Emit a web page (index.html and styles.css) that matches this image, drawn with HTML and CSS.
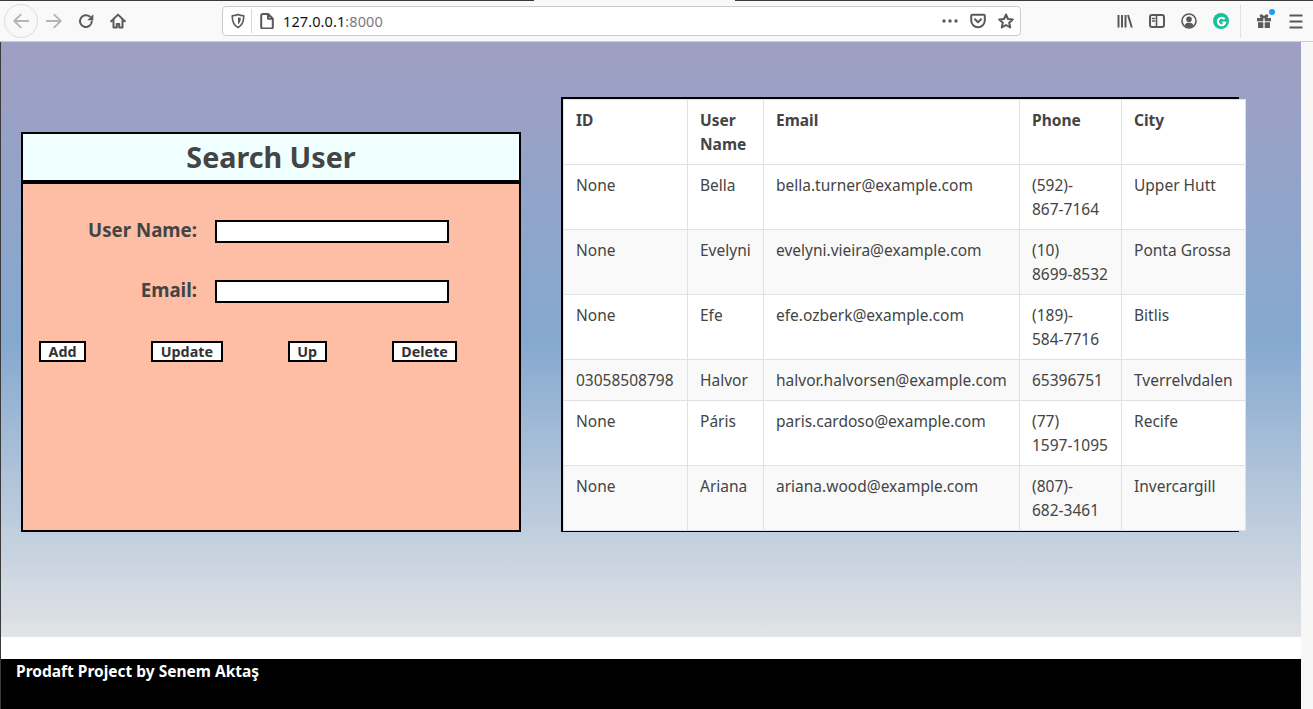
FILE: index.html
```html
<!DOCTYPE html>
<html lang="en">
<head>
<meta charset="utf-8">
<title>Prodaft Project</title>
<link rel="stylesheet" href="styles.css">
</head>
<body>
<header class="chrome">
  <span class="tab-notch"></span>
  <div class="nav-group">
    <span class="back-btn">
      <svg class="ico ico-lg" viewBox="0 0 16 16"><path class="st-faint" d="M14.500 8H2M7.800 2.300 2 8l5.800 5.700"/></svg>
    </span>
    <span class="slot">
      <svg class="ico ico-lg" viewBox="0 0 16 16"><path class="st-faint" d="M1.500 8H14M8.200 2.300 14 8l-5.800 5.700"/></svg>
    </span>
    <span class="slot">
      <svg class="ico" viewBox="0 0 16 16"><path class="st st-heavy" d="M13.800 8.500A5.900 5.900 0 1 1 11.800 3.600"/><path class="fl" d="M15.300 1.200v6h-6z"/></svg>
    </span>
    <span class="slot">
      <svg class="ico" viewBox="0 0 16 16"><path class="st st-heavy" d="M1.200 8.200 8 1.600l6.800 6.600M3.500 6.500v8h3.300v-3.600h2.400v3.600h3.300v-8"/></svg>
    </span>
  </div>
  <div class="urlbar">
    <svg class="ico shield" viewBox="0 0 16 16"><path class="st" d="M8 1.500c2 1 4 1.200 5.800 1.200 0 5-1 9.300-5.800 11.800C3.200 12 2.200 7.700 2.200 2.700 4 2.700 6 2.500 8 1.500z"/><path class="fl" d="M8 4.200c1 .4 1.800.5 2.800.5 0 2.800-.5 5-2.800 6.700z"/></svg>
    <span class="url-sep"></span>
    <svg class="ico doc-icon" viewBox="0 0 16 16"><path class="st st-heavy" d="M2.200 2.800C2.200 1.700 2.900 1 4 1h5.200L13.800 5.600v8.400c0 .9-.7 1.600-1.600 1.600H4c-1.100 0-1.800-.7-1.800-1.600zM9 1.200V5.800h4.600"/></svg>
    <span class="url-text">127.0.0.1<span class="url-port">:8000</span></span>
    <span class="url-actions">
      <svg class="ico" viewBox="0 0 16 16"><circle class="fl" cx="2" cy="8" r="1.700"/><circle class="fl" cx="8" cy="8" r="1.700"/><circle class="fl" cx="14" cy="8" r="1.700"/></svg>
      <svg class="ico" viewBox="0 0 16 16"><path class="st st-heavy" d="M2.200 1.800h11.600c.6 0 1 .4 1 1V7.500a6.800 6.800 0 0 1-13.600 0V2.800c0-.6.400-1 1-1z"/><path class="st st-heavy" d="M5 6.200 8 9.200 11 6.200"/></svg>
      <svg class="ico" viewBox="0 0 16 16"><path class="st st-heavy" d="M8 1.500 10 6l4.800.5-3.600 3.200 1 4.800L8 12l-4.200 2.500 1-4.800L1.200 6.500 6 6z"/></svg>
    </span>
  </div>
  <div class="tools">
    <svg class="ico" viewBox="0 0 16 16"><path class="st st-heavy st-butt" d="M1.500 2v12.500M5 2v12.500M8.500 2v12.500M11 2l3.800 12.500"/></svg>
    <svg class="ico" viewBox="0 0 16 16"><rect class="st st-heavy" x="1" y="2" width="14" height="12" rx="2"/><path class="st" d="M7.500 2.500v11M3.500 5.500h2M3.500 8h2"/></svg>
    <svg class="ico" viewBox="0 0 16 16"><circle class="st" cx="8" cy="8" r="7"/><circle class="fl" cx="8" cy="6.300" r="2.800"/><path class="fl" d="M3.500 12.500C4.500 10 6 9.800 8 9.800s3.500.2 4.500 2.700C11 14 9.500 14.400 8 14.400S5 14 3.500 12.500z"/></svg>
    <span class="grammarly">
      <svg class="ico" viewBox="0 0 16 16"><path class="st-white" d="M12.500 4.500A5.500 5.500 0 1 0 13.500 9.500H9"/></svg>
    </span>
    <span class="tool-sep"></span>
    <span class="gift">
      <svg class="ico" viewBox="0 0 16 16"><path class="fl" d="M1 5h6.300v3.200H1zM8.700 5H15v3.200H8.700zM2 9.200h5.300V15H3c-.6 0-1-.4-1-1zM8.700 9.200H14V14c0 .6-.4 1-1 1H8.700z"/><path class="st" d="M8 4.500C6.500 2 4.500 1.500 4.500 3S6 4.500 8 4.500c2 0 3.500 0 3.500-1.500S9.500 2 8 4.500z"/></svg>
      <span class="gift-dot"></span>
    </span>
    <svg class="ico" viewBox="0 0 16 16"><path class="st st-heavy st-butt" d="M1.500 2.500h13M1.500 8.500h13M1.500 14.500h13"/></svg>
  </div>
</header>

<div class="viewport">
  <div class="page">
    <main class="hero">
      <section class="search-panel">
        <h1 class="search-title">Search User</h1>
        <form class="search-form">
          <div class="field">
            <label class="field-label" for="uname">User Name:</label>
            <input class="field-input" id="uname" type="text">
          </div>
          <div class="field">
            <label class="field-label" for="email">Email:</label>
            <input class="field-input" id="email" type="text">
          </div>
          <div class="actions">
            <button class="btn" type="button">Add</button>
            <button class="btn" type="button">Update</button>
            <button class="btn" type="button">Up</button>
            <button class="btn" type="button">Delete</button>
          </div>
        </form>
      </section>
      <section class="table-frame">
        <table class="users">
          <colgroup>
            <col class="c-id"><col class="c-name"><col class="c-email"><col class="c-phone"><col class="c-city">
          </colgroup>
          <thead>
            <tr><th>ID</th><th>User Name</th><th>Email</th><th>Phone</th><th>City</th></tr>
          </thead>
          <tbody>
            <tr><td>None</td><td>Bella</td><td>bella.turner@example.com</td><td>(592)-<br>867-7164</td><td>Upper Hutt</td></tr>
            <tr><td>None</td><td>Evelyni</td><td>evelyni.vieira@example.com</td><td>(10)<br>8699-8532</td><td>Ponta Grossa</td></tr>
            <tr><td>None</td><td>Efe</td><td>efe.ozberk@example.com</td><td>(189)-<br>584-7716</td><td>Bitlis</td></tr>
            <tr><td>03058508798</td><td>Halvor</td><td>halvor.halvorsen@example.com</td><td>65396751</td><td>Tverrelvdalen</td></tr>
            <tr><td>None</td><td>Páris</td><td>paris.cardoso@example.com</td><td>(77)<br>1597-1095</td><td>Recife</td></tr>
            <tr><td>None</td><td>Ariana</td><td>ariana.wood@example.com</td><td>(807)-<br>682-3461</td><td>Invercargill</td></tr>
          </tbody>
        </table>
      </section>
    </main>
    <div class="spacer"></div>
    <footer class="site-footer">Prodaft Project by Senem Aktaş</footer>
  </div>
  <div class="scrollbar"></div>
</div>
</body>
</html>
```
FILE: styles.css
```css
* { box-sizing: border-box; }
html, body { margin: 0; height: 100%; }
body {
  width: 1313px;
  height: 709px;
  overflow: hidden;
  font-family: "Noto Sans", "Open Sans", sans-serif;
  font-size: 15.5px;
  line-height: 24px;
  color: #444;
  display: flex;
  flex-direction: column;
}

/* browser chrome */
.chrome {
  position: relative;
  height: 42px;
  flex: none;
  background: #f9f9fa;
  border-top: 1px solid #3a3a3a;
  border-bottom: 1px solid #ccc;
  display: flex;
  align-items: center;
}
.tab-notch {
  position: absolute;
  top: -1px;
  left: 534px;
  width: 201px;
  height: 1px;
  background: #f9f9fa;
}
.ico { width: 16px; height: 16px; display: block; flex: none; }
.ico-lg { width: 18px; height: 18px; }
.st, .st-faint, .st-white { fill: none; stroke-width: 1.6; stroke-linejoin: round; stroke-linecap: round; }
.st { stroke: #5a5a5c; }
.st-heavy { stroke-width: 2; }
.st-butt { stroke-linecap: butt; }
.st-faint { stroke: #b4b4b6; }
.st-white { stroke: #fff; stroke-width: 3; stroke-linecap: butt; }
.fl { fill: #5a5a5c; }

.nav-group { display: flex; align-items: center; width: 222px; padding-left: 4px; }
.back-btn {
  width: 34px; height: 34px;
  border: 1px solid #dcdcdc;
  border-radius: 50%;
  display: flex; align-items: center; justify-content: center;
}
.slot { width: 32px; display: flex; justify-content: center; }

.urlbar {
  width: 799px;
  height: 30px;
  background: #fff;
  border: 1px solid #ccc;
  border-radius: 4px;
  display: flex;
  align-items: center;
  padding-left: 7px;
}
.url-sep { width: 1px; height: 24px; background: #d8d8d8; margin: 0 7px 0 5px; }
.url-text { margin-left: 8px; font-size: 14.5px; color: #111; letter-spacing: .1px; }
.url-port { color: #7a7a7c; }
.url-actions { margin-left: auto; display: flex; gap: 12px; padding-right: 6px; }

.tools { flex: 1; display: flex; align-items: center; padding-left: 96px; gap: 16px; }
.grammarly {
  width: 16px; height: 16px; border-radius: 50%;
  background: #15c39a;
  display: flex; align-items: center; justify-content: center;
}
.grammarly .ico { width: 11px; height: 11px; }
.tool-sep { width: 1px; height: 33px; background: #e0e0e0; margin-left: -5px; margin-right: -1px; }
.gift { position: relative; display: block; }
.gift-dot {
  position: absolute; top: -4px; right: -3px;
  width: 6px; height: 6px; border-radius: 50%;
  background: #1a9ff5;
}

/* page */
.viewport { flex: 1; display: flex; min-height: 0; border-left: 1px solid #3a3a3a; }
.page { width: 1300px; display: flex; flex-direction: column; background: #fff; }
.scrollbar { flex: 1; background: #f7f7f7; }

.hero {
  height: 595px;
  flex: none;
  background: linear-gradient(180deg, #9f9fc2 0%, #85a8cf 50%, #e1e3e6 100%);
  display: flex;
  align-items: flex-start;
  padding: 55px 0 0 20px;
  gap: 40px;
}
.spacer { height: 22px; flex: none; }
.site-footer {
  flex: 1;
  background: #000;
  color: #fff;
  font-weight: 700;
  padding: 0 0 0 15px;
  line-height: 25px;
}

/* search panel */
.search-panel {
  width: 500px;
  height: 400px;
  margin-top: 35px;
  background: #fdbea5;
  border: 2px solid #000;
  display: flex;
  flex-direction: column;
}
.search-title {
  margin: 0;
  height: 50px;
  background: #f0ffff;
  border-bottom: 4px solid #000;
  text-align: center;
  font-size: 28.7px;
  line-height: 46px;
  font-weight: 700;
  color: #444;
}
.search-form { display: flex; flex-direction: column; padding-top: 36px; }
.field { display: flex; align-items: flex-start; height: 60px; }
.field-label {
  width: 174px;
  text-align: right;
  font-weight: 700;
  font-size: 18.7px;
  line-height: 20px;
}
.field-input {
  margin-left: 18px;
  width: 234px;
  height: 23px;
  border: 2px solid #000;
  background: #fff;
  border-radius: 0;
  padding: 0;
}
.actions { display: flex; gap: 65px; padding: 1px 0 0 16px; }
.btn {
  height: 21px;
  padding: 0 7.6px;
  border: 2px solid #000;
  border-radius: 0;
  background: #fff;
  font: 700 14.3px/17px "Noto Sans", sans-serif;
  color: #333;
}

/* table */
.table-frame {
  width: 678px;
  height: 435px;
  border: 2px solid #000;
  border-right: 0;
}
.users {
  width: 682px;
  table-layout: fixed;
  border-collapse: collapse;
  background: #fff;
  color: #444;
}
.c-id { width: 124px; }
.c-name { width: 76px; }
.c-email { width: 256px; }
.c-phone { width: 102px; }
.c-city { width: 124px; }
.users th, .users td {
  padding: 8px 12px;
  text-align: left;
  vertical-align: top;
  border: 1px solid #dee2e6;
  white-space: nowrap;
}
.users th { white-space: normal; }
.users tbody tr:nth-child(even) { background: #f9f9f9; }
```
